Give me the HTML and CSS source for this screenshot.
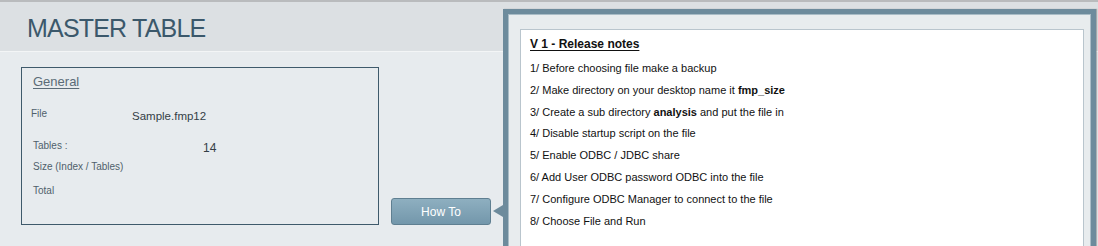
FILE: index.html
```html
<!doctype html>
<html lang="en">
    <head>
        <meta charset="UTF-8" />
        <meta name="viewport" content="width=device-width, initial-scale=1.0" />
        <title>Master Table</title>

        <link rel="stylesheet" href="styles.css">
    </head>
    <body>
        <div class="header">
            <h1 class="page-title">MASTER TABLE</h1>
        </div>

        <div class="content">
            <div class="general-box">
                <div class="box-title">General</div>
                <div class="field-row file-row">
                    <span class="label">File</span>
                    <span class="value">Sample.fmp12</span>
                </div>
                <div class="field-row tables-row">
                    <span class="label">Tables :</span>
                    <span class="value">14</span>
                </div>
                <div class="field-row size-row">
                    <span class="label">Size (Index / Tables)</span>
                </div>
                <div class="field-row total-row">
                    <span class="label">Total</span>
                </div>
            </div>

            <button class="howto-btn">How To</button>
        </div>

        <div class="popover">
            <span class="popover-arrow"></span>
            <div class="notes">
                <div class="notes-title">V 1 - Release notes</div>
                <div class="note">1/ Before choosing file make a backup</div>
                <div class="note">2/ Make directory on your desktop name it <b>fmp_size</b></div>
                <div class="note">3/ Create a sub directory <b>analysis</b> and put the file in</div>
                <div class="note">4/ Disable startup script on the file</div>
                <div class="note">5/ Enable ODBC / JDBC share</div>
                <div class="note">6/ Add User ODBC password ODBC into the file</div>
                <div class="note">7/ Configure ODBC Manager to connect to the file</div>
                <div class="note">8/ Choose File and Run</div>
            </div>
        </div>
    </body>
</html>
```

FILE: styles.css
```css
html,
body {
    margin: 0;
    padding: 0;
    background: #e7ebee;
    font-family: "Liberation Sans", Arial, Helvetica, sans-serif;
    overflow: hidden;
}

.header {
    height: 49px;
    border-top: 2px solid #b9bbbd;
    border-bottom: 1px solid #f3f5f6;
    background: #dce0e3;
    box-sizing: content-box;
    padding-left: 27px;
}

.page-title {
    margin: 0;
    padding-top: 11px;
    font-size: 25px;
    line-height: 30px;
    font-weight: normal;
    letter-spacing: -0.8px;
    color: #3b586b;
}

.content {
    display: flex;
    align-items: flex-end;
    gap: 12px;
    padding: 15px 0 0 21px;
}

.general-box {
    width: 358px;
    height: 158px;
    box-sizing: border-box;
    border: 1px solid #3f5a6b;
    padding: 6px 0 0 9px;
}

.box-title {
    margin-left: 2px;
    font-size: 13px;
    line-height: 16px;
    color: #5b6b77;
    text-decoration: underline;
    text-underline-offset: 2px;
}

.field-row {
    display: flex;
    align-items: flex-start;
}

.field-row .label {
    font-size: 10px;
    line-height: 14px;
    color: #4f5f6b;
}

.field-row .value {
    font-size: 11.5px;
    line-height: 14px;
    color: #343e46;
}

.file-row {
    margin-top: 17px;
    height: 32px;
}

.file-row .label {
    width: 101px;
}

.file-row .value {
    margin-top: 2px;
}

.tables-row,
.size-row,
.total-row {
    padding-left: 2px;
}

.tables-row {
    height: 21px;
}

.tables-row .label {
    width: 170px;
}

.tables-row .value {
    margin-top: 2px;
    font-size: 12px;
}

.size-row {
    height: 24px;
}

.howto-btn {
    width: 100px;
    height: 27px;
    border: 1px solid #5f7f91;
    border-radius: 3px;
    background: linear-gradient(#8eafc0, #7397ab);
    color: #fff;
    font-family: inherit;
    font-size: 12px;
    cursor: pointer;
}

.popover {
    position: absolute;
    top: 9px;
    left: 503px;
    width: 593px;
    height: 260px;
    box-sizing: border-box;
    border: 5px solid #6d8b9c;
    box-shadow: inset 0 0 0 1px #a9bcc6, 1px 0 1px rgba(0, 0, 0, 0.25);
    background: #e8ecee;
    padding: 15px 7px 0 12px;
}

.popover-arrow {
    position: absolute;
    top: 191px;
    left: -15px;
    width: 0;
    height: 0;
    border-top: 6px solid transparent;
    border-bottom: 6px solid transparent;
    border-right: 10px solid #6d8b9c;
}

.notes {
    height: 100%;
    background: #fff;
    border: 1px solid #b9c5cd;
    padding: 3px 9px 0;
    color: #111;
}

.notes-title {
    font-size: 12px;
    line-height: 22px;
    font-weight: bold;
    text-decoration: underline;
    text-underline-offset: 2px;
    margin-bottom: 3px;
}

.note {
    font-size: 11px;
    line-height: 21.8px;
}
```
